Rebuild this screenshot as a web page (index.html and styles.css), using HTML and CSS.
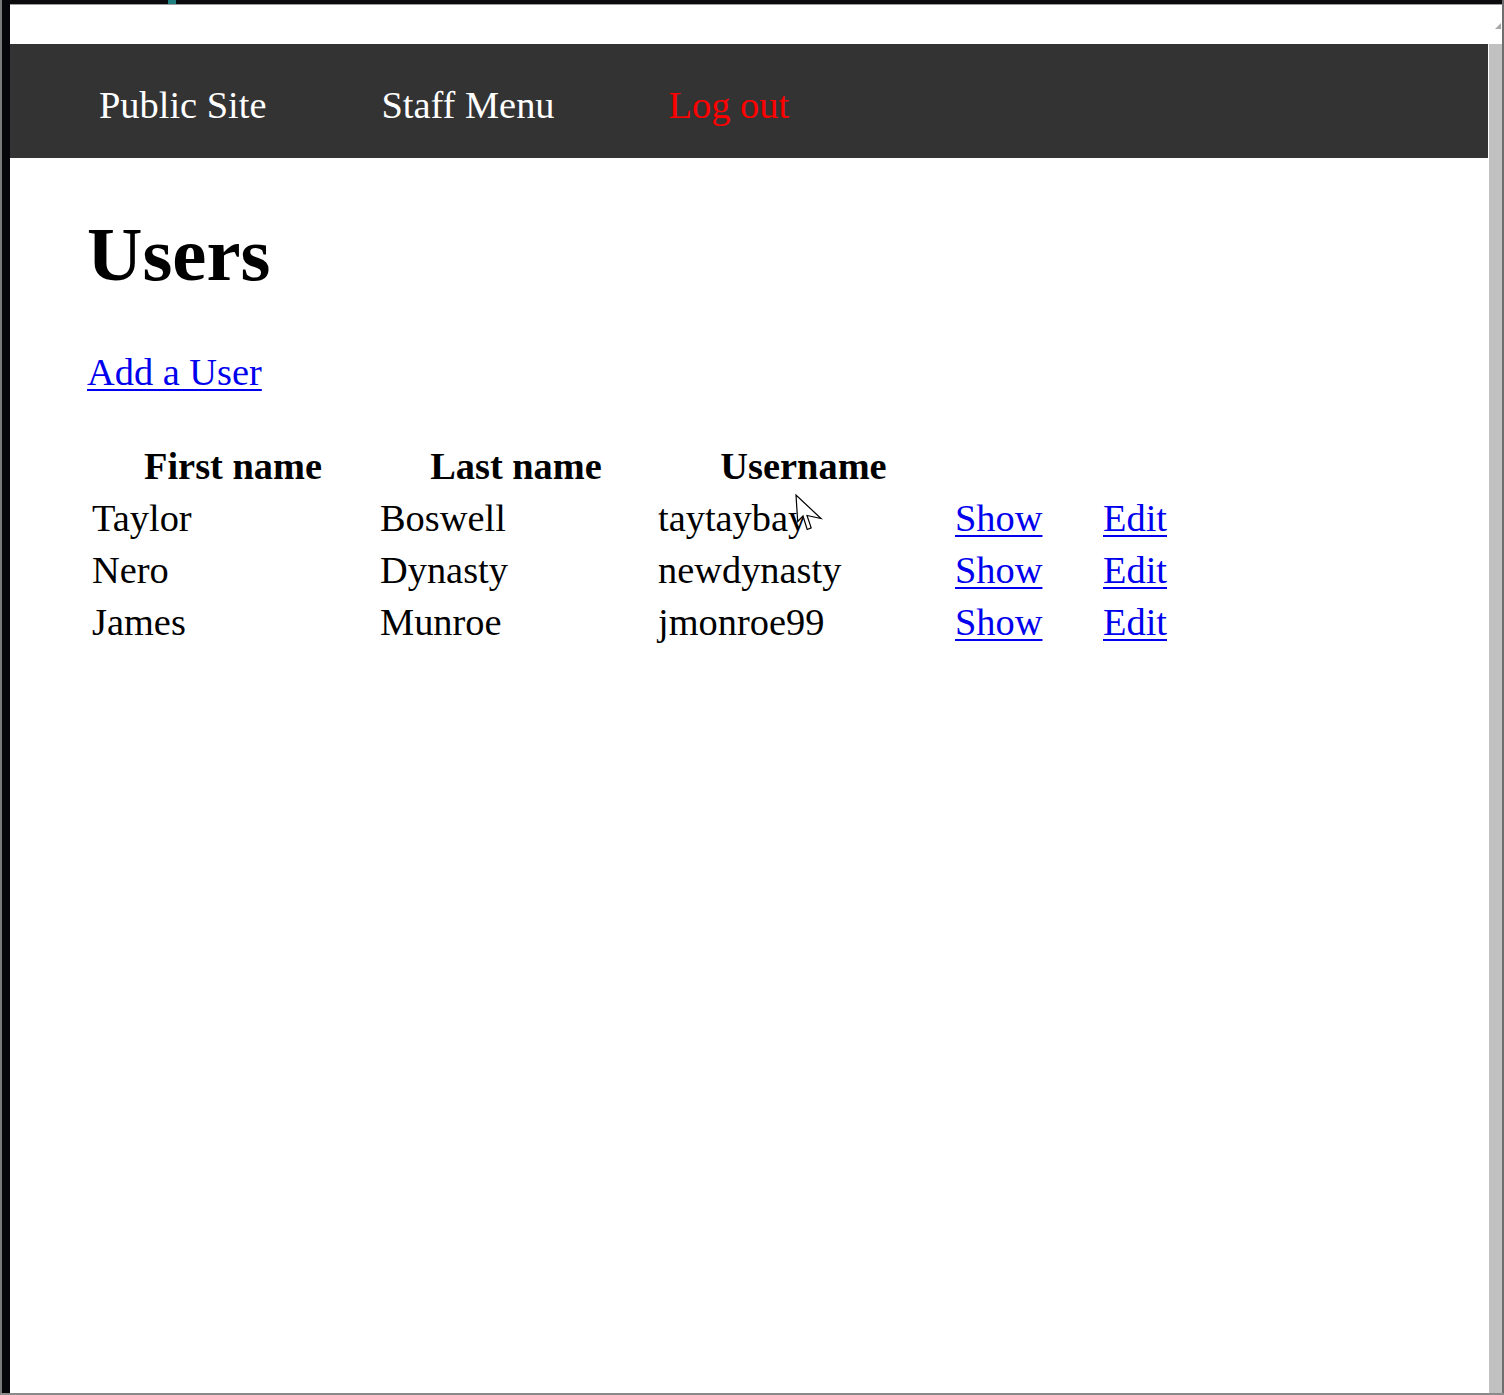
FILE: index.html
```html
<!DOCTYPE html>
<html lang="en">
<head>
<meta charset="utf-8">
<title>Users</title>
<link rel="stylesheet" href="styles.css">
</head>
<body>
<div class="screen">
  <div class="left-edge"></div>
  <div class="center">
    <div class="topbar"><span class="tab-glint"></span></div>
    <div class="chrome-strip"><span class="scroll-arrow"></span></div>
    <div class="body-row">
      <div class="page">
        <nav class="nav">
          <a class="nav-link" href="#">Public Site</a>
          <a class="nav-link" href="#">Staff Menu</a>
          <a class="nav-link logout" href="#">Log out</a>
        </nav>
        <main class="content">
          <h1 class="title">Users</h1>
          <p class="actions"><a href="#">Add a User</a></p>
          <table class="users">
            <thead>
              <tr>
                <th class="c1">First name</th>
                <th class="c2">Last name</th>
                <th class="c3">Username</th>
                <th class="c4"></th>
                <th class="c5"></th>
              </tr>
            </thead>
            <tbody>
              <tr>
                <td>Taylor</td><td>Boswell</td><td class="uname">taytaybay<svg class="cursor" width="28" height="38" viewBox="0 0 28 38"><path d="M1 1 L2.7 27.5 L8 22 L12.2 35.5 L16.2 33.8 L12 21.5 L26 24.5 Z" fill="#fff" stroke="#000" stroke-width="1.2" stroke-linejoin="miter"/></svg></td>
                <td><a href="#">Show</a></td><td><a href="#">Edit</a></td>
              </tr>
              <tr>
                <td>Nero</td><td>Dynasty</td><td>newdynasty</td>
                <td><a href="#">Show</a></td><td><a href="#">Edit</a></td>
              </tr>
              <tr>
                <td>James</td><td>Munroe</td><td>jmonroe99</td>
                <td><a href="#">Show</a></td><td><a href="#">Edit</a></td>
              </tr>
            </tbody>
          </table>
        </main>
      </div>
      <div class="scrollbar"></div>
    </div>
  </div>
  <div class="right-edge"></div>
</div>
</body>
</html>
```

FILE: styles.css
```css
html, body {
  margin: 0;
  padding: 0;
  background: #ffffff;
}

body {
  font-family: "Liberation Serif", "Times New Roman", serif;
  font-size: 38.4px;
  color: #000;
}

.screen {
  display: flex;
  width: 1504px;
  height: 1395px;
  box-sizing: border-box;
  border-bottom: 2px solid #8a8a8a;
  overflow: hidden;
}

.left-edge {
  width: 8px;
  flex: 0 0 8px;
  background: #05060a;
  border-left: 2px solid #7a7a7a;
}

.right-edge {
  width: 2px;
  flex: 0 0 2px;
  background: #6e6e6e;
}

.center {
  flex: 1;
  display: flex;
  flex-direction: column;
  min-width: 0;
}

.topbar {
  height: 4px;
  flex: 0 0 4px;
  background: #0b0b0d;
  border-bottom: 1px solid #9c9c9c;
  display: flex;
}

.tab-glint {
  display: block;
  width: 8px;
  height: 4px;
  margin-left: 158px;
  background: #1f7f80;
}

.chrome-strip {
  height: 39px;
  flex: 0 0 39px;
  background: #fff;
  display: flex;
  justify-content: flex-end;
  align-items: flex-start;
}

.scroll-arrow {
  display: block;
  width: 0;
  height: 0;
  margin-top: 18px;
  margin-right: 1px;
  border-left: 6px solid transparent;
  border-bottom: 6px solid #a8a8a8;
}

.body-row {
  flex: 1;
  display: flex;
  min-height: 0;
}

.page {
  flex: 1;
  background: #fff;
}

.scrollbar {
  width: 13px;
  flex: 0 0 13px;
  margin-left: 1px;
  background: #c1c1c1;
}

.nav {
  background: #333333;
  height: 114px;
  box-sizing: border-box;
  padding: 39px 0 31px 89px;
  display: flex;
  gap: 115px;
  line-height: 44px;
}

.nav-link {
  color: #ffffff;
  text-decoration: none;
  white-space: nowrap;
}

.nav-link.logout {
  color: #ff0000;
  margin-left: -1px;
}

.content {
  padding-left: 77px;
}

.title {
  font-size: 76.8px;
  line-height: 88px;
  font-weight: bold;
  margin: 53px 0 0 0;
}

.actions {
  margin: 51px 0 0;
  line-height: 44px;
}

.actions a,
.users a {
  color: #0000ee;
  text-decoration: underline;
  text-decoration-thickness: 2px;
  text-underline-offset: 4px;
}

.users {
  margin: 46px 0 0 2px;
  border-collapse: separate;
  border-spacing: 0;
  line-height: 52px;
}

.users th,
.users td {
  padding: 0 3px;
  white-space: nowrap;
}

.users th {
  font-weight: bold;
  text-align: center;
}

.users td {
  text-align: left;
}

.c1 { width: 282px; }
.c2 { width: 272px; }
.c3 { width: 291px; }
.c4 { width: 142px; }
.c5 { width: 64px; }

.uname {
  position: relative;
}

.cursor {
  position: absolute;
  left: 140px;
  top: 2px;
}
```
